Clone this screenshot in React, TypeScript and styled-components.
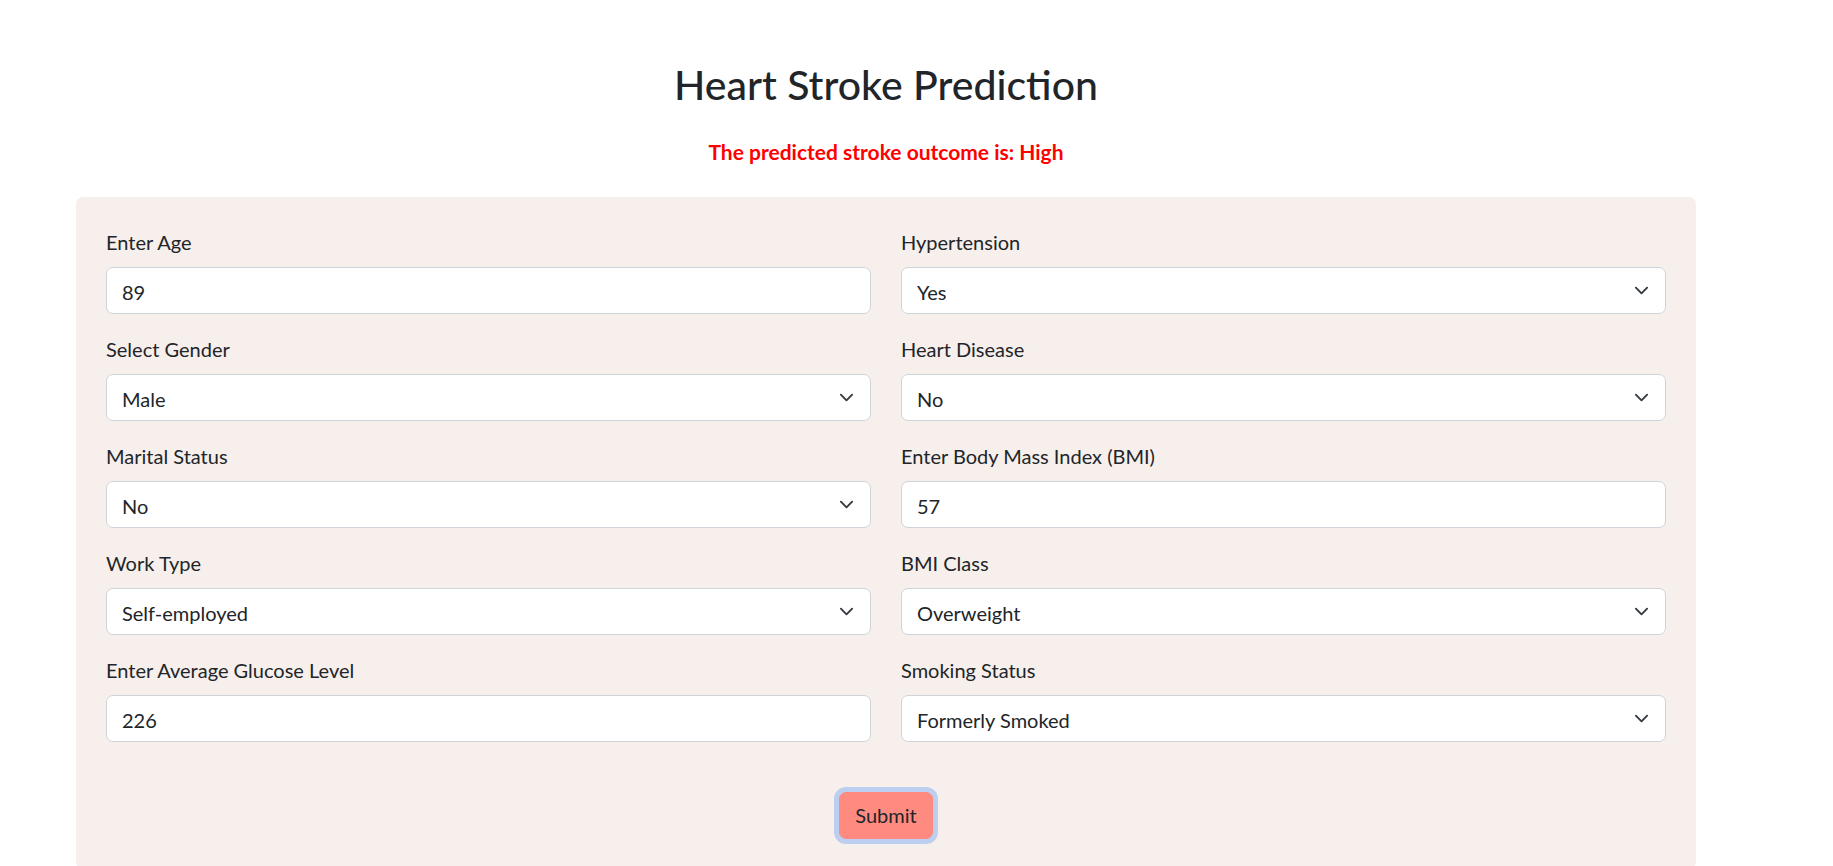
import React from "react";
import styled, { createGlobalStyle } from "styled-components";

const GlobalStyle = createGlobalStyle`
  *, *::before, *::after { box-sizing: border-box; }
  html, body { margin: 0; padding: 0; background: #ffffff; }
  body {
    font-family: "Lato", "Open Sans", sans-serif;
    color: #212529;
    font-size: 20px;
    line-height: 1.5;
  }
`;

const Page = styled.main`
  width: 1620px;
  margin-left: 76px;
  padding-top: 60px;
  display: flex;
  flex-direction: column;
  align-items: stretch;
`;

const Title = styled.h1`
  margin: 0;
  font-family: "Lato", sans-serif;
  font-size: 41px;
  font-weight: 500;
  line-height: 1.2;
  color: #212529;
  text-align: center;
`;

const Result = styled.p`
  margin: 28px 0 0;
  font-size: 21px;
  font-weight: 700;
  line-height: 30px;
  color: #ff0000;
  text-align: center;
`;

const Panel = styled.form`
  margin-top: 30px;
  background: #f7efec;
  border-radius: 7px;
  padding: 30px;
  display: flex;
  flex-direction: column;
  align-items: center;
`;

const Grid = styled.div`
  width: 100%;
  display: grid;
  grid-template-columns: 1fr 1fr;
  column-gap: 30px;
`;

const Column = styled.div`
  display: flex;
  flex-direction: column;
`;

const Group = styled.div`
  display: flex;
  flex-direction: column;
  margin-bottom: 20px;
`;

const Label = styled.label`
  font-size: 20px;
  line-height: 30px;
  margin-bottom: 10px;
  color: #212529;
`;

const controlCss = `
  width: 100%;
  height: 47px;
  margin: 0;
  padding: 2px 15px 0;
  font-family: "Lato", sans-serif;
  font-size: 20px;
  line-height: 30px;
  color: #212529;
  background: #ffffff;
  border: 1px solid #ced4da;
  border-radius: 7px;
  outline: none;
`;

const TextInput = styled.input`
  ${controlCss}
`;

const SelectWrap = styled.div`
  position: relative;
  width: 100%;
`;

const Select = styled.select`
  ${controlCss}
  appearance: none;
  -webkit-appearance: none;
  padding-right: 50px;
`;

const Chevron = styled.svg`
  position: absolute;
  right: 17.5px;
  top: 16px;
  width: 15px;
  height: 15px;
  pointer-events: none;
`;

const SubmitButton = styled.button`
  margin-top: 30px;
  padding: 8px 15px 8px;
  font-family: "Lato", sans-serif;
  font-size: 20px;
  line-height: 29px;
  color: #212529;
  background: #ff8a80;
  border: 1px solid #ff8a80;
  border-radius: 7px;
  box-shadow: 0 0 0 5px rgba(13, 110, 253, 0.25);
  cursor: pointer;
`;

type Field =
  | { kind: "input"; label: string; value: string }
  | { kind: "select"; label: string; value: string; options: string[] };

const leftFields: Field[] = [
  { kind: "input", label: "Enter Age", value: "89" },
  { kind: "select", label: "Select Gender", value: "Male", options: ["Male", "Female", "Other"] },
  { kind: "select", label: "Marital Status", value: "No", options: ["Yes", "No"] },
  {
    kind: "select",
    label: "Work Type",
    value: "Self-employed",
    options: ["Private", "Self-employed", "Govt_job", "children", "Never_worked"],
  },
  { kind: "input", label: "Enter Average Glucose Level", value: "226" },
];

const rightFields: Field[] = [
  { kind: "select", label: "Hypertension", value: "Yes", options: ["Yes", "No"] },
  { kind: "select", label: "Heart Disease", value: "No", options: ["Yes", "No"] },
  { kind: "input", label: "Enter Body Mass Index (BMI)", value: "57" },
  {
    kind: "select",
    label: "BMI Class",
    value: "Overweight",
    options: ["Underweight", "Normal", "Overweight", "Obese"],
  },
  {
    kind: "select",
    label: "Smoking Status",
    value: "Formerly Smoked",
    options: ["Never Smoked", "Formerly Smoked", "Smokes", "Unknown"],
  },
];

function FieldGroup({ field, id }: { field: Field; id: string }) {
  return (
    <Group>
      <Label htmlFor={id}>{field.label}</Label>
      {field.kind === "input" ? (
        <TextInput id={id} type="text" defaultValue={field.value} />
      ) : (
        <SelectWrap>
          <Select id={id} defaultValue={field.value}>
            {field.options.map((o) => (
              <option key={o} value={o}>
                {o}
              </option>
            ))}
          </Select>
          <Chevron viewBox="0 0 16 16" aria-hidden="true">
            <path
              d="m2 5 6 6 6-6"
              fill="none"
              stroke="#343a40"
              strokeWidth="2"
              strokeLinecap="round"
              strokeLinejoin="round"
            />
          </Chevron>
        </SelectWrap>
      )}
    </Group>
  );
}

export default function App() {
  return (
    <>
      <GlobalStyle />
      <Page>
        <Title>Heart Stroke Prediction</Title>
        <Result>The predicted stroke outcome is: High</Result>
        <Panel onSubmit={(e) => e.preventDefault()}>
          <Grid>
            <Column>
              {leftFields.map((f, i) => (
                <FieldGroup key={f.label} field={f} id={`l${i}`} />
              ))}
            </Column>
            <Column>
              {rightFields.map((f, i) => (
                <FieldGroup key={f.label} field={f} id={`r${i}`} />
              ))}
            </Column>
          </Grid>
          <SubmitButton type="submit">Submit</SubmitButton>
        </Panel>
      </Page>
    </>
  );
}
